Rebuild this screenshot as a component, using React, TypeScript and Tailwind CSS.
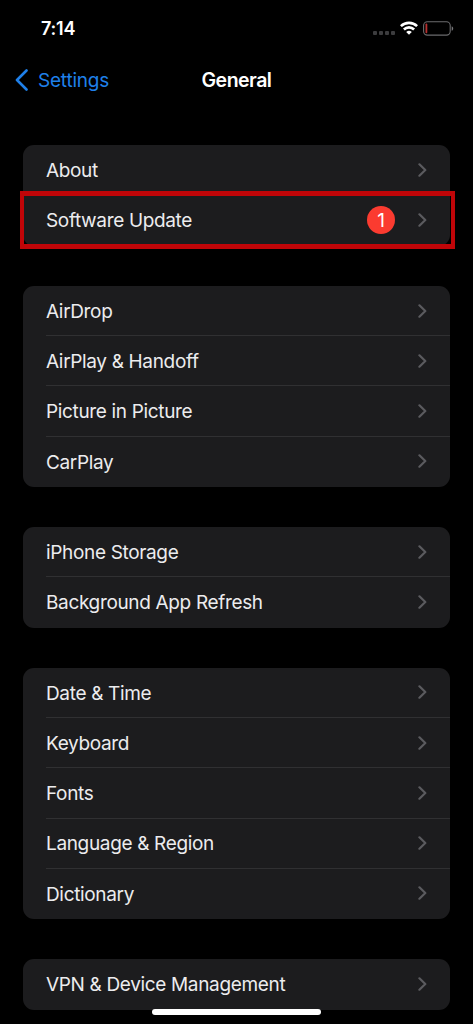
interface SettingsRow {
    label: string;
    badge?: number;
    highlighted?: boolean;
}

const groups: SettingsRow[][] = [
    [
        { label: "About" },
        { label: "Software Update", badge: 1, highlighted: true }
    ],
    [
        { label: "AirDrop" },
        { label: "AirPlay & Handoff" },
        { label: "Picture in Picture" },
        { label: "CarPlay" }
    ],
    [
        { label: "iPhone Storage" },
        { label: "Background App Refresh" }
    ],
    [
        { label: "Date & Time" },
        { label: "Keyboard" },
        { label: "Fonts" },
        { label: "Language & Region" },
        { label: "Dictionary" }
    ],
    [
        { label: "VPN & Device Management" }
    ]
];

function WifiIcon() {
    return (
        <svg width="18" height="14" viewBox="0 0 18 14" fill="none" stroke="white" strokeWidth="2.6">
            <path d="M0.9 5.2a11.5 11.5 0 0 1 16.2 0" />
            <path d="M3.9 8.5a7.2 7.2 0 0 1 10.2 0" />
            <path d="M9 13.8 6.2 11a4 4 0 0 1 5.6 0Z" fill="white" stroke="none" />
        </svg>
    );
}

function BatteryIcon() {
    return (
        <svg width="31" height="15" viewBox="0 0 31 15" fill="none">
            <rect x="0.6" y="0.7" width="26.6" height="13.4" rx="3.8" stroke="#6b6b6d" strokeWidth="1.1" />
            <rect x="2.5" y="2.6" width="1.8" height="9.6" rx="0.9" fill="#b8302f" />
            <path d="M28.7 5.2v4.6c1-.4 1.5-1.3 1.5-2.3s-.5-1.9-1.5-2.3Z" fill="#77777a" />
        </svg>
    );
}

function Chevron() {
    return (
        <svg width="9" height="14" viewBox="0 0 9 14" fill="none" stroke="#5b5b5f" strokeWidth="2.2" strokeLinecap="round" strokeLinejoin="round">
            <path d="M1.4 1.3 7.3 7l-5.9 5.7" />
        </svg>
    );
}

function StatusBar() {
    return (
        <div className="flex h-14 items-center justify-between pl-[41px] pr-[19px] text-white">
            <span className="pt-[2px] text-[18px] font-semibold leading-none tracking-[-0.2px]">7:14</span>
            <div className="flex items-center">
                <div className="mr-[5px] mt-[9px] flex gap-[2px]">
                    {[0, 1, 2, 3].map((dot) => (
                        <span key={dot} className="h-1 w-1 rounded-[1px] bg-[#3c3c3e]" />
                    ))}
                </div>
                <WifiIcon />
                <div className="ml-[5px]">
                    <BatteryIcon />
                </div>
            </div>
        </div>
    );
}

function NavBar() {
    return (
        <header className="grid h-12 grid-cols-3 items-center">
            <button className="flex items-center pl-[15px] text-[#1f80ea]">
                <svg width="14" height="22" viewBox="0 0 14 22" fill="none" stroke="currentColor" strokeWidth="2.6" strokeLinecap="round" strokeLinejoin="round">
                    <path d="M11.5 1.5 2 11l9.5 9.5" />
                </svg>
                <span className="ml-[9px] pt-[2px] text-[19px] tracking-[-0.2px]">Settings</span>
            </button>
            <h1 className="pt-[2px] text-center text-[19.5px] font-semibold tracking-[-0.5px] text-white">General</h1>
        </header>
    );
}

function Row({ label, badge, highlighted }: SettingsRow) {
    return (
        <li className="group relative flex h-[50.25px] items-center pl-[23px]">
            <div className="flex h-full flex-1 items-center border-b border-[#303032] pr-[23.5px] group-last:border-transparent">
                <span className="flex-1 pt-[3px] text-[19px] tracking-[-0.34px] text-[#ececee]">{label}</span>
                {badge && (
                    <span className="mr-[22.5px] flex h-7 w-7 items-center justify-center rounded-full bg-[#fb3b30] pt-px text-[19px] leading-none text-white">
                        {badge}
                    </span>
                )}
                <Chevron />
            </div>
            {highlighted && (
                <div className="absolute -left-[3px] -right-[5px] -top-[4.6px] h-[58px] border-x-4 border-y-5 border-[#c00508]" />
            )}
        </li>
    );
}

export default function App() {
    return (
        <div className="relative h-[1024px] w-[473px] overflow-hidden bg-black font-['Inter',sans-serif]">
            <StatusBar />
            <NavBar />
            <main className="flex flex-col gap-[40.2px] pl-[23px] pr-[23px] pt-[41.3px]">
                {groups.map((rows, index) => (
                    <ul key={index} className="rounded-[11px] bg-[#1c1c1e]">
                        {rows.map((row) => (
                            <Row key={row.label} {...row} />
                        ))}
                    </ul>
                ))}
            </main>
            {/* home indicator */}
            <div className="absolute left-[152px] top-[1009px] h-[6px] w-[169px] rounded-full bg-white" />
        </div>
    );
}
